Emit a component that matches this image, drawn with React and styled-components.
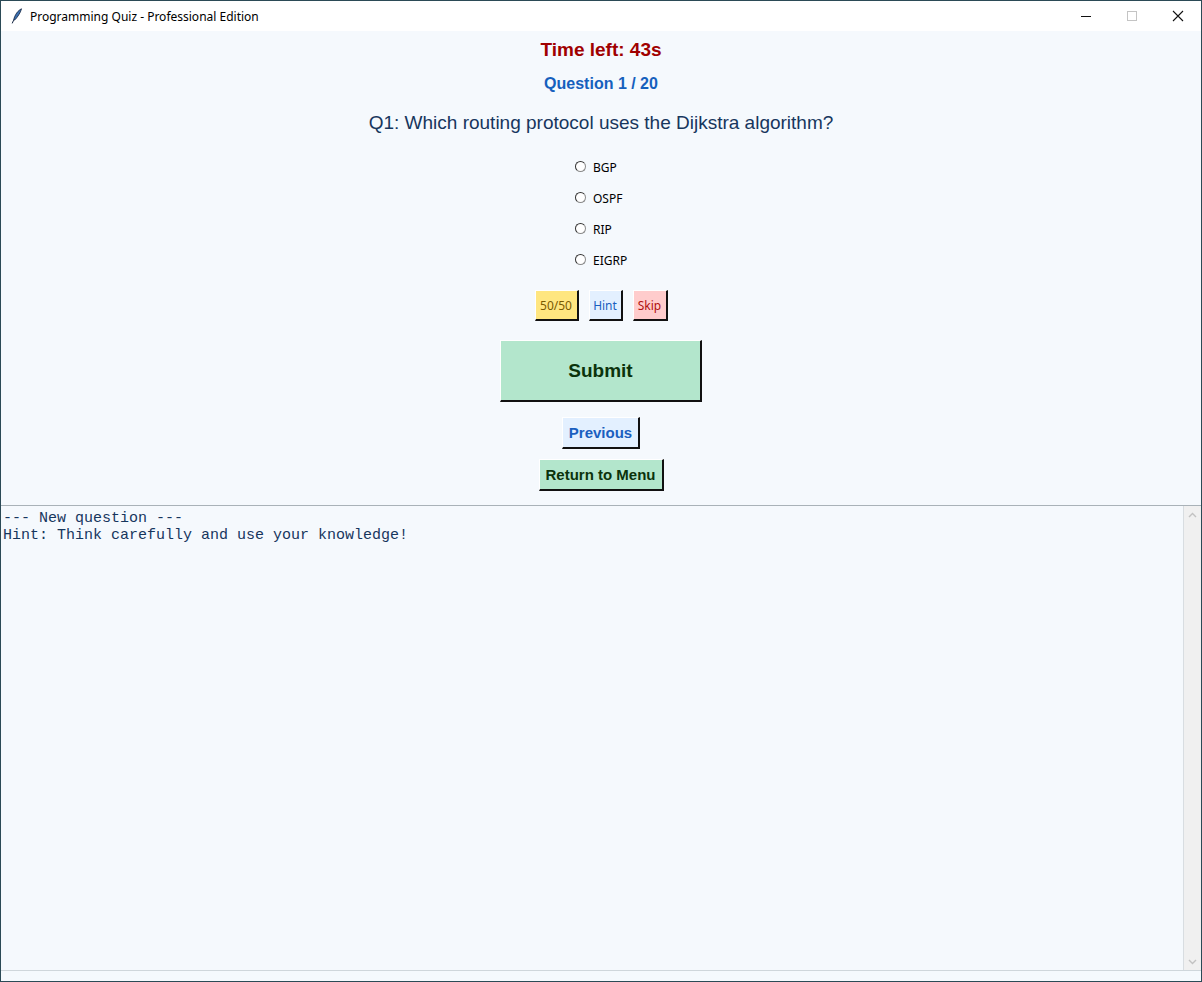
import React from "react";
import styled, { createGlobalStyle } from "styled-components";

const GlobalStyle = createGlobalStyle`
  html, body {
    margin: 0;
    padding: 0;
    background: #ffffff;
  }
  #root {
    width: 1202px;
    height: 982px;
  }
`;

const options = ["BGP", "OSPF", "RIP", "EIGRP"];

const App = () => {
  return (
    <Window>
      <GlobalStyle />
      <TitleBar>
        <TitleLeft>
          <FeatherIcon />
          <TitleText>Programming Quiz - Professional Edition</TitleText>
        </TitleLeft>
        <Controls>
          <ControlButton>
            <svg width="12" height="12" viewBox="0 0 12 12">
              <line x1="1" y1="6.5" x2="11" y2="6.5" stroke="#111" strokeWidth="1" />
            </svg>
          </ControlButton>
          <ControlButton>
            <svg width="12" height="12" viewBox="0 0 12 12">
              <rect x="1.5" y="1.5" width="9" height="9" fill="none" stroke="#c4c4c4" strokeWidth="1" />
            </svg>
          </ControlButton>
          <ControlButton>
            <svg width="12" height="12" viewBox="0 0 12 12">
              <path d="M1 1 L11 11 M11 1 L1 11" stroke="#111" strokeWidth="1.1" />
            </svg>
          </ControlButton>
        </Controls>
      </TitleBar>

      <Body>
        <Timer>Time left: 43s</Timer>
        <Counter>Question 1 / 20</Counter>
        <QuestionText>Q1: Which routing protocol uses the Dijkstra algorithm?</QuestionText>

        <OptionList>
          {options.map((o) => (
            <OptionRow key={o}>
              <RadioDot />
              <OptionLabel>{o}</OptionLabel>
            </OptionRow>
          ))}
        </OptionList>

        <PowerRow>
          <PowerButton $bg="#ffe680" $fg="#7a5a00" $w="44px">50/50</PowerButton>
          <PowerButton $bg="#e3f0ff" $fg="#1a5fbf" $w="34px">Hint</PowerButton>
          <PowerButton $bg="#ffcccc" $fg="#b01010" $w="35px">Skip</PowerButton>
        </PowerRow>

        <SubmitButton>Submit</SubmitButton>
        <NavButton $bg="#e3f0ff" $fg="#1a5fbf" $w="78px" $mt="15px">
          Previous
        </NavButton>
        <NavButton $bg="#b3e6cc" $fg="#0b330b" $w="125px" $mt="10px">
          Return to Menu
        </NavButton>

        <LogArea>
          <LogText>
            {"--- New question ---\nHint: Think carefully and use your knowledge!"}
          </LogText>
          <ScrollBar>
            <ScrollArrow>
              <svg width="9" height="6" viewBox="0 0 9 6">
                <path d="M1 5 L4.5 1.5 L8 5" fill="none" stroke="#c2c2c2" strokeWidth="1.4" />
              </svg>
            </ScrollArrow>
            <ScrollArrow>
              <svg width="9" height="6" viewBox="0 0 9 6">
                <path d="M1 1 L4.5 4.5 L8 1" fill="none" stroke="#c2c2c2" strokeWidth="1.4" />
              </svg>
            </ScrollArrow>
          </ScrollBar>
        </LogArea>
      </Body>
    </Window>
  );
};

const FeatherIcon = () => (
  <svg width="12" height="16" viewBox="0 0 12 16">
    <path d="M10.5 0.8 C7 2.5 3.8 6.5 2.6 12.2 L4 11.8 C6.5 9 9.5 5 10.5 0.8 Z" fill="#3a6fb0" stroke="#10213d" strokeWidth="0.8" />
    <path d="M2.6 12.2 L1.2 15.4" stroke="#10213d" strokeWidth="1" />
  </svg>
);

export default App;

const Window = styled.div`
  box-sizing: border-box;
  width: 1202px;
  height: 982px;
  border: 1px solid #2b4a56;
  display: flex;
  flex-direction: column;
  background: #f5f9fd;
  overflow: hidden;
`;

const TitleBar = styled.div`
  height: 30px;
  flex-shrink: 0;
  background: #ffffff;
  display: flex;
  align-items: center;
  justify-content: space-between;
`;

const TitleLeft = styled.div`
  display: flex;
  align-items: center;
  gap: 7px;
  padding-left: 10px;
`;

const TitleText = styled.span`
  font-family: "Noto Sans", "Open Sans", sans-serif;
  font-size: 12px;
  color: #000;
`;

const Controls = styled.div`
  display: flex;
  height: 100%;
`;

const ControlButton = styled.div`
  width: 46px;
  height: 100%;
  display: flex;
  align-items: center;
  justify-content: center;
`;

const Body = styled.div`
  flex: 1;
  display: flex;
  flex-direction: column;
  align-items: center;
  min-height: 0;
`;

const Timer = styled.div`
  margin-top: 8px;
  font-family: "Liberation Sans", Arial, sans-serif;
  font-weight: bold;
  font-size: 19px;
  line-height: 22px;
  color: #a00000;
`;

const Counter = styled.div`
  margin-top: 13px;
  font-family: "Liberation Sans", Arial, sans-serif;
  font-weight: bold;
  font-size: 16px;
  line-height: 19px;
  color: #1560bd;
`;

const QuestionText = styled.div`
  margin-top: 19px;
  font-family: "Liberation Sans", Arial, sans-serif;
  font-size: 19px;
  line-height: 22px;
  color: #17365d;
`;

const OptionList = styled.div`
  margin-top: 18px;
  width: 64px;
  padding-left: 12px;
  display: flex;
  flex-direction: column;
`;

const OptionRow = styled.div`
  height: 31px;
  display: flex;
  align-items: center;
  gap: 7px;
`;

const RadioDot = styled.span`
  box-sizing: border-box;
  width: 11px;
  height: 11px;
  border-radius: 50%;
  background: #ffffff;
  border: 1px solid #8a8a8a;
  border-top-color: #333;
  border-left-color: #333;
  margin-top: -3px;
`;

const OptionLabel = styled.span`
  font-family: "Noto Sans", "Open Sans", sans-serif;
  font-size: 12px;
  color: #000;
`;

const PowerRow = styled.div`
  margin-top: 14px;
  display: flex;
  gap: 10px;
`;

const raised = `
  box-sizing: border-box;
  border-style: solid;
  border-width: 1px 2px 2px 1px;
  border-color: #ffffff #111111 #111111 #ffffff;
  padding: 0;
  cursor: pointer;
`;

const PowerButton = styled.button`
  ${raised}
  width: ${(p) => p.$w};
  height: 31px;
  background: ${(p) => p.$bg};
  color: ${(p) => p.$fg};
  font-family: "Noto Sans", "Open Sans", sans-serif;
  font-size: 12px;
`;

const SubmitButton = styled.button`
  ${raised}
  margin-top: 19px;
  width: 202px;
  height: 62px;
  background: #b3e6cc;
  color: #0b330b;
  font-family: "Liberation Sans", Arial, sans-serif;
  font-weight: bold;
  font-size: 19px;
`;

const NavButton = styled.button`
  ${raised}
  margin-top: ${(p) => p.$mt};
  width: ${(p) => p.$w};
  height: 32px;
  background: ${(p) => p.$bg};
  color: ${(p) => p.$fg};
  font-family: "Liberation Sans", Arial, sans-serif;
  font-weight: bold;
  font-size: 15px;
`;

const LogArea = styled.div`
  margin-top: 14px;
  align-self: stretch;
  flex: 1;
  display: flex;
  border-top: 1px solid #a9b2b8;
  border-bottom: 1px solid #cfd6db;
  margin-bottom: 10px;
  min-height: 0;
`;

const LogText = styled.pre`
  flex: 1;
  margin: 0;
  padding: 4px 2px 0;
  border-right: 1px solid #d8dde1;
  font-family: "Liberation Mono", "Courier New", monospace;
  font-size: 15px;
  line-height: 17px;
  color: #17365d;
  background: #f5f9fd;
`;

const ScrollBar = styled.div`
  width: 17px;
  background: #f0f0f0;
  display: flex;
  flex-direction: column;
  justify-content: space-between;
`;

const ScrollArrow = styled.div`
  height: 17px;
  display: flex;
  align-items: center;
  justify-content: center;
`;
